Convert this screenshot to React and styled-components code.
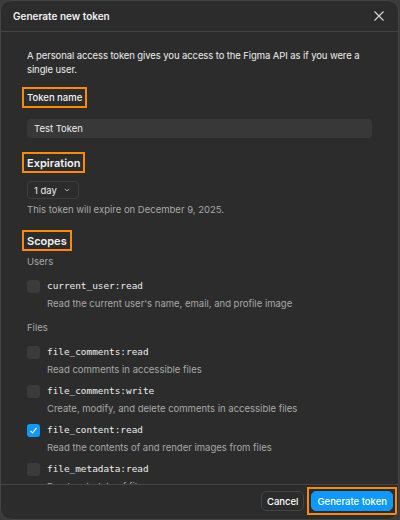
import React from "react";
import styled, { createGlobalStyle } from "styled-components";

const GlobalStyle = createGlobalStyle`
    html, body {
        margin: 0;
        padding: 0;
        background: #3b3b3b;
    }
    body {
        font-family: Inter, "Noto Sans", sans-serif;
        -webkit-font-smoothing: antialiased;
    }
`;

const ORANGE = "#ff8a00";

const Dialog = styled.div`
    width: 399px;
    height: 520px;
    box-sizing: border-box;
    background: #2c2c2c;
    border: 1px solid #444;
    border-radius: 11px;
    display: flex;
    flex-direction: column;
    overflow: hidden;
    color: #e6e6e6;
`;

const Header = styled.div`
    height: 30px;
    flex: none;
    display: flex;
    align-items: center;
    justify-content: space-between;
    padding: 0 9px 0 12px;
    border-bottom: 1px solid #444;
`;

const Title = styled.div`
    font-size: 10px;
    font-weight: 600;
    color: #f0f0f0;
`;

const CloseButton = styled.button`
    background: none;
    border: 0;
    padding: 4px;
    display: flex;
    color: #d8d8d8;
    cursor: pointer;
`;

const Body = styled.div`
    flex: 1;
    overflow: hidden;
    padding: 17px 26px 0 26px;
`;

const Intro = styled.p`
    margin: 0;
    font-size: 9.5px;
    letter-spacing: -0.1px;
    line-height: 14px;
    color: #ececec;
`;

const Label = styled.div`
    display: inline-flex;
    align-items: center;
    box-sizing: border-box;
    height: 21px;
    margin-left: -5px;
    padding: 0 3px;
    border: 2px solid ${(p) => (p.$highlight ? ORANGE : "transparent")};
    font-size: ${(p) => (p.$large ? "11px" : "9.5px")};
    font-weight: ${(p) => (p.$large ? 600 : 500)};
    color: #f2f2f2;
    margin-top: ${(p) => p.$top || 0}px;
`;

const Input = styled.div`
    margin-top: 11px;
    height: 19px;
    border-radius: 4px;
    background: #383838;
    display: flex;
    align-items: center;
    padding: 0 7px;
    font-size: 9.5px;
    color: #ececec;
`;

const Select = styled.div`
    margin-top: 8px;
    display: inline-flex;
    align-items: center;
    gap: 7px;
    height: 18px;
    box-sizing: border-box;
    padding: 0 8px 0 6px;
    border: 1px solid #3e3e3e;
    border-radius: 4px;
    font-size: 9.5px;
    color: #ececec;
`;

const Hint = styled.div`
    margin-top: ${(p) => p.$top || 0}px;
    font-size: 9.5px;
    line-height: 14px;
    color: #a8a8a8;
`;

const Scope = styled.div`
    display: grid;
    grid-template-columns: 13px 1fr;
    column-gap: 7px;
    row-gap: 4px;
    margin-top: ${(p) => p.$top || 0}px;
`;

const Checkbox = styled.span`
    width: 13px;
    height: 13px;
    border-radius: 3px;
    background: ${(p) => (p.$checked ? "#0d99ff" : "#3b3b3b")};
    display: flex;
    align-items: center;
    justify-content: center;
    align-self: center;
`;

const ScopeName = styled.div`
    font-family: "DejaVu Sans Mono", "Liberation Mono", monospace;
    font-size: 9.4px;
    line-height: 14px;
    color: #ececec;
`;

const ScopeDesc = styled.div`
    grid-column: 2;
    font-size: 9.5px;
    line-height: 14px;
    color: #a8a8a8;
`;

const Footer = styled.div`
    flex: none;
    border-top: 1px solid #444;
    display: flex;
    justify-content: flex-end;
    align-items: center;
    gap: 3px;
    padding: 2px 1px 4px 0;
`;

const Button = styled.button`
    height: 20px;
    box-sizing: border-box;
    padding: 0 5px;
    border-radius: 5px;
    font-family: inherit;
    font-size: 9.5px;
    font-weight: 500;
    cursor: pointer;
    border: 1px solid ${(p) => (p.$primary ? "#0d99ff" : "#444")};
    background: ${(p) => (p.$primary ? "#0d99ff" : "transparent")};
    color: #fff;
`;

const Outline = styled.div`
    border: 2px solid ${ORANGE};
    padding: 2px;
    display: flex;
`;

const scopes = [
    {
        group: "Users",
        items: [
            {
                name: "current_user:read",
                desc: "Read the current user's name, email, and profile image",
            },
        ],
    },
    {
        group: "Files",
        items: [
            { name: "file_comments:read", desc: "Read comments in accessible files" },
            {
                name: "file_comments:write",
                desc: "Create, modify, and delete comments in accessible files",
            },
            {
                name: "file_content:read",
                desc: "Read the contents of and render images from files",
                checked: true,
            },
            { name: "file_metadata:read", desc: "Read metadata of files" },
        ],
    },
];

export default function App() {
    return (
        <>
            <GlobalStyle />
            <Dialog>
                <Header>
                    <Title>Generate new token</Title>
                    <CloseButton>
                        <svg width="12" height="12" viewBox="0 0 12 12">
                            <path
                                d="M1.5 1.5 L10.5 10.5 M10.5 1.5 L1.5 10.5"
                                stroke="currentColor"
                                strokeWidth="1.1"
                            />
                        </svg>
                    </CloseButton>
                </Header>
                <Body>
                    <Intro>
                        A personal access token gives you access to the Figma API as if
                        you were a single user.
                    </Intro>
                    <Label $highlight $top={10}>Token name</Label>
                    <Input>Test Token</Input>
                    <div>
                        <Label $highlight $large $top={14}>Expiration</Label>
                    </div>
                    <Select>
                        1 day
                        <svg width="6" height="4" viewBox="0 0 6 4">
                            <path d="M0.8 0.8 L3 3 L5.2 0.8" fill="none" stroke="#bbb" strokeWidth="0.9" />
                        </svg>
                    </Select>
                    <Hint $top={4}>This token will expire on December 9, 2025.</Hint>
                    <div>
                        <Label $highlight $large $top={13}>Scopes</Label>
                    </div>
                    {scopes.map((g, gi) => (
                        <div key={g.group}>
                            <Hint $top={gi === 0 ? 4 : 10}>{g.group}</Hint>
                            {g.items.map((s, i) => (
                                <Scope key={s.name} $top={i === 0 ? 10 : 7}>
                                    <Checkbox $checked={s.checked}>
                                        {s.checked && (
                                            <svg width="9" height="9" viewBox="0 0 9 9">
                                                <path
                                                    d="M1.5 4.8 L3.6 6.9 L7.6 1.8"
                                                    fill="none"
                                                    stroke="#fff"
                                                    strokeWidth="1.1"
                                                />
                                            </svg>
                                        )}
                                    </Checkbox>
                                    <ScopeName>{s.name}</ScopeName>
                                    <ScopeDesc>{s.desc}</ScopeDesc>
                                </Scope>
                            ))}
                        </div>
                    ))}
                </Body>
                <Footer>
                    <Button>Cancel</Button>
                    <Outline>
                        <Button $primary>Generate token</Button>
                    </Outline>
                </Footer>
            </Dialog>
        </>
    );
}
